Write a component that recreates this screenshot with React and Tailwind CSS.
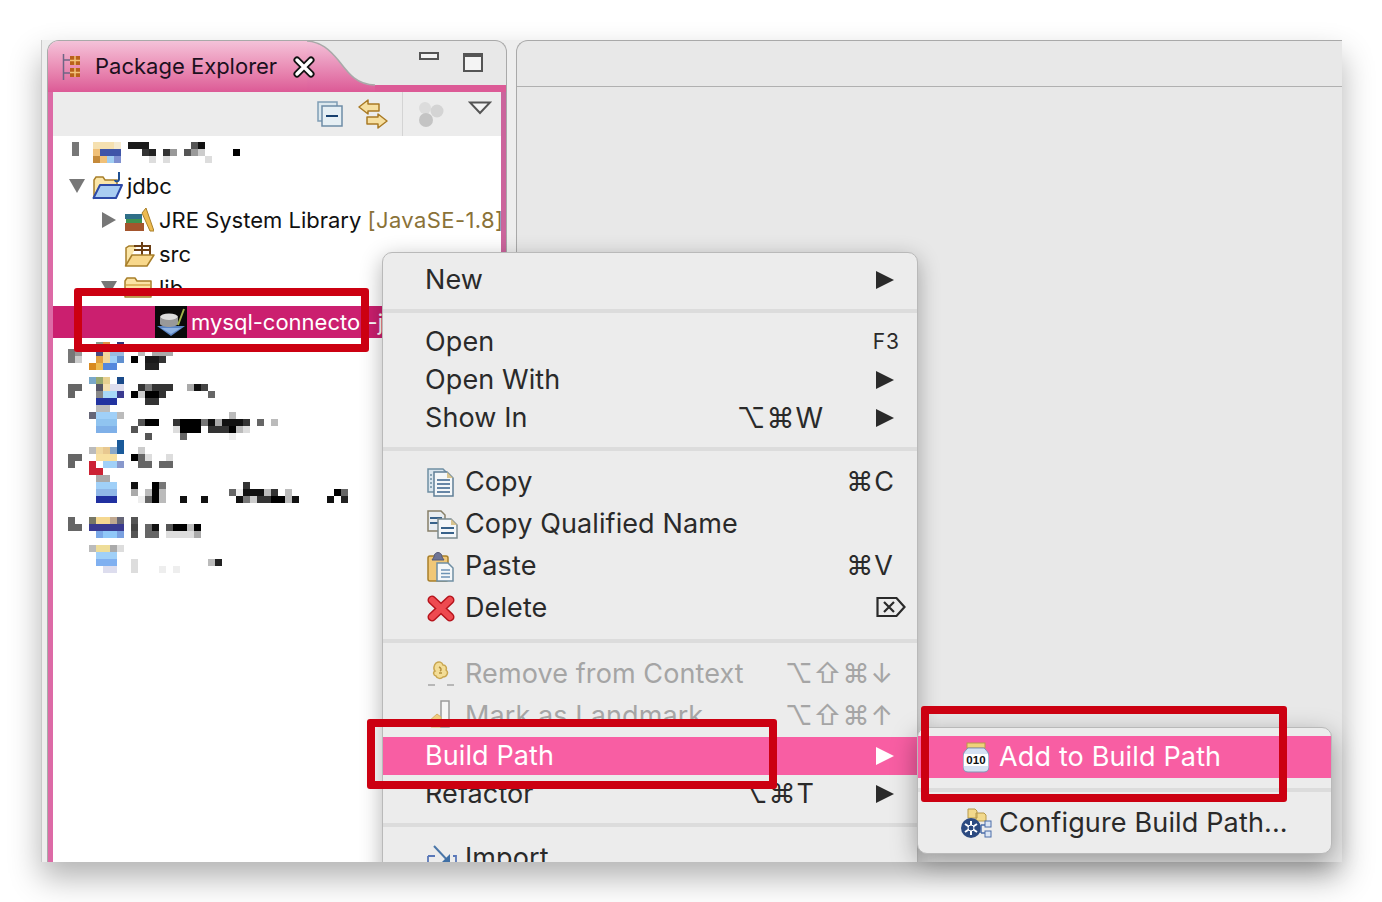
import React from 'react'

const Twist = ({ dir }) => (
  <svg width="18" height="16" viewBox="0 0 18 16" className="flex-none">
    {dir === 'down' ? <path d="M1 1h16l-8 14z" fill="#777" /> : <path d="M2 0l14 8-14 8z" fill="#777" />}
  </svg>
)

const MenuArrow = ({ white }) => (
  <svg width="18" height="20" viewBox="0 0 18 20"><path d="M0 1l18 9-18 9z" fill={white ? '#fff' : '#2a2a2a'} /></svg>
)

const PackageIcon = () => (
  <svg width="20" height="26" viewBox="0 0 20 26" className="flex-none">
    <path d="M1.500 0v26M1.500 6h7M1.500 19h7" stroke="#6f6585" strokeWidth="1.500" fill="none" />
    <rect x="8" y="2" width="10" height="9" fill="#b9611c" />
    <path d="M13 2v9M8 6.500h10" stroke="#f3c27a" strokeWidth="1.500" />
    <rect x="8" y="14" width="10" height="9" fill="#b9611c" />
    <path d="M13 14v9M8 18.500h10" stroke="#f3c27a" strokeWidth="1.500" />
  </svg>
)

const CloseIcon = () => (
  <svg width="22" height="22" viewBox="0 0 22 22" className="flex-none">
    <path d="M4 4l14 14M18 4L4 18" stroke="#111" strokeWidth="7" strokeLinecap="round" />
    <path d="M4 4l14 14M18 4L4 18" stroke="#fff" strokeWidth="3.500" strokeLinecap="round" />
  </svg>
)

const CollapseIcon = () => (
  <svg width="26" height="26" viewBox="0 0 26 26" className="flex-none">
    <rect x="1" y="1" width="19" height="19" fill="#dce8ee" stroke="#7f9db5" strokeWidth="1.500" />
    <rect x="5" y="5" width="20" height="20" fill="#e6eff4" stroke="#6d8ca6" strokeWidth="1.500" />
    <path d="M9 15h12" stroke="#17406f" strokeWidth="2" />
  </svg>
)

const LinkIcon = () => (
  <svg width="30" height="30" viewBox="0 0 30 30" className="flex-none">
    <path d="M1 8l9-7v4h11v7H10v3z" fill="#f6dfa0" stroke="#a97a25" strokeWidth="1.500" strokeLinejoin="round" />
    <path d="M29 22l-9 7v-4H9v-7h11v-3z" fill="#f6dfa0" stroke="#a97a25" strokeWidth="1.500" strokeLinejoin="round" />
  </svg>
)

const FilterIcon = () => (
  <svg width="27" height="27" viewBox="0 0 27 27" className="flex-none">
    <circle cx="8" cy="7" r="6" fill="#dcdcdc" />
    <circle cx="20" cy="10" r="6.500" fill="#d4d4d4" />
    <circle cx="9" cy="19" r="7" fill="#c4c4c4" />
  </svg>
)

const JavaProjectIcon = () => (
  <svg width="31" height="28" viewBox="0 0 31 28" className="flex-none">
    <path d="M2 25V8l2-3h7l2 3h12v5H9L2 25z" fill="#fbe6a8" stroke="#a87f2a" strokeWidth="1.500" />
    <path d="M1.500 26L8 13h22l-6 13z" fill="#a9cdf2" stroke="#2d4aa8" strokeWidth="2" strokeLinejoin="round" />
    <path d="M27 0v7c0 3-4 3-4 1" fill="none" stroke="#1f4f92" strokeWidth="2" />
  </svg>
)

const BooksIcon = () => (
  <svg width="30" height="26" viewBox="0 0 30 26" className="flex-none">
    <rect x="1" y="7" width="17" height="5" fill="#2f6f88" />
    <rect x="2" y="12" width="16" height="4" fill="#3f9150" />
    <rect x="1" y="16" width="19" height="8" fill="#a4552d" />
    <path d="M18 6l4-5 8 23h-4z" fill="#eebb50" stroke="#a87f2a" />
  </svg>
)

const SrcIcon = () => (
  <svg width="31" height="26" viewBox="0 0 31 26" className="flex-none">
    <path d="M2 24V7l3-2h8" fill="#fbe6a8" stroke="#a87f2a" strokeWidth="1.500" />
    <path d="M10 5h16v9M18 1v13M10 9h16" fill="none" stroke="#6b3e14" strokeWidth="2" />
    <path d="M1.500 25L8 14h22l-7 11z" fill="#f8d88c" stroke="#a87f2a" strokeWidth="1.500" strokeLinejoin="round" />
  </svg>
)

const FolderIcon = () => (
  <svg width="28" height="22" viewBox="0 0 28 22" className="flex-none">
    <path d="M1 20V4l2-3h8l2 3h14v16z" fill="#fbe3a4" stroke="#a87f2a" strokeWidth="1.500" strokeLinejoin="round" />
    <path d="M2 8h24" stroke="#d9a94d" strokeWidth="1.500" />
  </svg>
)

const MysqlJarIcon = () => (
  <svg width="32" height="32" viewBox="0 0 32 32" className="flex-none">
    <rect width="32" height="32" fill="#0a0a0a" />
    <path d="M2 20h28L16 30z" fill="#5b84c4" />
    <path d="M6 22h20L16 28z" fill="#8fb2e2" />
    <ellipse cx="14" cy="11" rx="9" ry="3.500" fill="#ddd" />
    <path d="M5 11v7c2 4 16 4 18 0v-7c-3 4-15 4-18 0z" fill="#999" />
    <path d="M23 19L29 3" stroke="#a5b34a" strokeWidth="2" />
  </svg>
)

const CopyIcon = () => (
  <svg width="28" height="30" viewBox="0 0 28 30">
    <path d="M1 2h15l3 3v20H1z" fill="#d9e5ee" stroke="#6f8ea3" strokeWidth="1.500" />
    <path d="M7 5h13l6 6v18H7z" fill="#f4f7f9" stroke="#5f7f96" strokeWidth="1.500" />
    <path d="M20 5l6 6h-6z" fill="#d9c48f" />
    <path d="M10 13h13M10 17h13M10 21h13M10 25h13" stroke="#38628a" strokeWidth="1.500" />
    <path d="M3 8h2M3 12h2M3 16h2M3 20h2" stroke="#6f8ea3" strokeWidth="1.500" />
  </svg>
)

const CopyQualifiedIcon = () => (
  <svg width="31" height="30" viewBox="0 0 31 30">
    <path d="M1 2h13l4 4v16H1z" fill="#e8edf1" stroke="#867f68" strokeWidth="1.500" />
    <path d="M3 9h12M3 14h12" stroke="#38628a" strokeWidth="2" />
    <path d="M11 10h13l6 6v13H11z" fill="#f4f7f9" stroke="#7b8a8f" strokeWidth="1.500" />
    <path d="M24 10l6 6h-6z" fill="#d9c48f" />
    <path d="M14 19h13M14 24h13" stroke="#38628a" strokeWidth="2" />
  </svg>
)

const PasteIcon = () => (
  <svg width="27" height="31" viewBox="0 0 27 31">
    <rect x="1" y="5" width="20" height="25" rx="2" fill="#f0c777" stroke="#a87f2a" strokeWidth="1.500" />
    <path d="M7 6c0-6 8-6 8 0l2 3H5z" fill="#6f7596" stroke="#555a78" />
    <path d="M10 12h11l5 5v13H10z" fill="#f4f7f9" stroke="#6f8ea3" strokeWidth="1.500" />
    <path d="M14 19h9M14 22.500h9M14 26h9" stroke="#6d93b5" strokeWidth="1.500" />
  </svg>
)

const DeleteIcon = () => (
  <svg width="28" height="27" viewBox="0 0 28 27">
    <path d="M5 5l18 17M23 5L5 22" stroke="#b5121b" strokeWidth="9" strokeLinecap="round" />
    <path d="M5 5l18 17M23 5L5 22" stroke="#ee4a50" strokeWidth="6" strokeLinecap="round" />
  </svg>
)

const DeleteKey = () => (
  <svg width="30" height="22" viewBox="0 0 30 22">
    <path d="M1.500 2h19l8 9-8 9h-19z" fill="none" stroke="#2a2a2a" strokeWidth="2.200" />
    <path d="M8 6l10 10M18 6L8 16" stroke="#2a2a2a" strokeWidth="2.200" />
  </svg>
)

const RemoveContextIcon = () => (
  <svg width="28" height="26" viewBox="0 0 28 26">
    <path d="M9 2c3-2 6-1 7 2 3 0 4 3 3 5 3 2 1 7-3 7-2 2-6 2-7-1-3-1-3-4-1-5-2-2-1-6 1-8z" fill="#f3dd97" stroke="#c9a650" strokeWidth="1.500" />
    <path d="M12 6c2 1 3 3 1 4M12 12h3" stroke="#b5913f" strokeWidth="1.500" fill="none" />
    <path d="M1 24h7M20 24h7" stroke="#a5a5a5" strokeWidth="1.500" />
  </svg>
)

const LandmarkIcon = () => (
  <svg width="24" height="32" viewBox="0 0 24 32">
    <rect x="14" y="1" width="8" height="26" fill="#f5f5f5" stroke="#9a9a9a" strokeWidth="1.500" />
    <path d="M1 22l9-8 4 3v10H4z" fill="#efcc80" stroke="#d7b065" />
  </svg>
)

const ImportIcon = () => (
  <svg width="30" height="26" viewBox="0 0 30 26">
    <path d="M7 1l15 16" stroke="#4a76a8" strokeWidth="2" />
    <path d="M23 9v9h-9z" fill="#3f6fa5" />
    <path d="M1 11h7M1 11v14M23 24h6V11h-3" fill="none" stroke="#5a78b8" strokeWidth="1.800" />
  </svg>
)

const JarIcon = () => (
  <svg width="26" height="31" viewBox="0 0 26 31">
    <rect x="4" y="1" width="18" height="5" fill="#f0d27a" stroke="#b79a4a" />
    <path d="M5 6h16c3 3 5 5 5 8v11c0 3-2 5-5 5H5c-3 0-5-2-5-5V14c0-3 2-5 5-8z" fill="#d5e0f2" stroke="#8294b5" />
    <rect x="1" y="12" width="24" height="12" fill="#fff" />
    <text x="13" y="22" textAnchor="middle" fontSize="11.500" fontWeight="700" fontFamily="Liberation Sans, sans-serif" fill="#111">010</text>
  </svg>
)

const ConfigureIcon = () => (
  <svg width="32" height="31" viewBox="0 0 32 31">
    <path d="M8 1h7l2 2v7H8zM16 5h8l2 2v6h-10z" fill="#f2d98c" stroke="#b79a4a" />
    <circle cx="11" cy="20" r="10" fill="#2c4a80" />
    <path d="M11 13v14M5 16l12 8M17 16L5 24" stroke="#fff" strokeWidth="2" />
    <circle cx="11" cy="20" r="3" fill="#2c4a80" stroke="#fff" />
    <path d="M21 17h5M21 25h5M21 17v8" stroke="#4a6ca8" strokeWidth="1.500" fill="none" />
    <rect x="25" y="13" width="6" height="6" fill="#dbe5f4" stroke="#4a6ca8" />
    <rect x="25" y="23" width="6" height="6" fill="#dbe5f4" stroke="#4a6ca8" />
  </svg>
)

// pixelated rows, page coordinates via viewBox
const cells = [
  [0, 4, 1, '#8a9a8a'], [0, 5, 1, '#e09040'], [0, 7, 1, '#33337a'],
  [1, 0, 1, '#777'], [1, 1, 1, '#999'], [1, 4, 1, '#4a4a80'], [1, 5, 1, '#f0d8a0'], [1, 6, 2, '#9abbe0'], [1, 10, 1, '#bbb'], [1, 12, 3, '#aaa'],
  [2, 0, 1, '#777'], [2, 1, 1, '#ccc'], [2, 4, 1, '#e0a040'], [2, 5, 1, '#f3d79a'], [2, 6, 1, '#a0d0f8'], [2, 7, 1, '#6090d0'], [2, 9, 1, '#000'], [2, 11, 2, '#1a1a1a'], [2, 13, 1, '#333'],
  [3, 3, 1, '#d88a20'], [3, 4, 1, '#eebb50'], [3, 5, 2, '#5588dd'], [3, 11, 2, '#222'],
  [5, 3, 1, '#7aa8c8'], [5, 4, 1, '#9aaa70'], [5, 5, 1, '#e8d090'], [5, 7, 1, '#1a4a8a'],
  [6, 0, 2, '#666'], [6, 4, 1, '#556'], [6, 5, 1, '#f5e0b0'], [6, 6, 2, '#dde'], [6, 10, 1, '#333'], [6, 11, 1, '#777'], [6, 12, 3, '#333'], [6, 17, 1, '#aaa'], [6, 18, 1, '#111'], [6, 19, 1, '#444'],
  [7, 0, 1, '#666'], [7, 4, 1, '#888'], [7, 5, 2, '#a8d8f8'], [7, 7, 1, '#3a3a90'], [7, 9, 1, '#000'], [7, 10, 1, '#ccc'], [7, 11, 2, '#000'], [7, 13, 1, '#333'], [7, 20, 1, '#666'],
  [8, 4, 3, '#2233a0'], [8, 11, 2, '#333'],
  [9, 4, 2, '#bbb'],
  [10, 3, 1, '#667'], [10, 4, 3, '#a0d0f8'], [10, 7, 1, '#bbb'], [10, 23, 1, '#bbb'],
  [11, 4, 3, '#90c4f0'], [11, 10, 1, '#555'], [11, 11, 2, '#000'], [11, 15, 1, '#333'], [11, 16, 3, '#000'], [11, 19, 1, '#777'], [11, 20, 1, '#111'], [11, 21, 1, '#aaa'], [11, 22, 3, '#111'], [11, 25, 1, '#333'], [11, 27, 1, '#666'], [11, 29, 1, '#bbb'],
  [12, 4, 3, '#7fb0e8'], [12, 9, 1, '#555'], [12, 15, 1, '#ddd'], [12, 16, 3, '#000'], [12, 20, 3, '#333'], [12, 23, 1, '#000'], [12, 24, 1, '#bbb'], [12, 25, 1, '#ddd'],
  [13, 11, 1, '#555'], [13, 16, 1, '#666'], [13, 23, 1, '#eee'],
  [14, 7, 1, '#1a5a9a'],
  [15, 3, 1, '#bbb'], [15, 4, 1, '#f0d8a0'], [15, 5, 1, '#e8c890'], [15, 6, 1, '#8aa8c8'], [15, 7, 1, '#1a5a9a'], [15, 10, 1, '#ccc'],
  [16, 0, 2, '#666'], [16, 4, 3, '#f8e0a0'], [16, 9, 1, '#000'], [16, 10, 1, '#666'], [16, 11, 1, '#ddd'], [16, 14, 1, '#ddd'],
  [17, 0, 1, '#666'], [17, 3, 1, '#cc2233'], [17, 5, 2, '#a0d0f8'], [17, 7, 1, '#8898cc'], [17, 10, 2, '#666'], [17, 13, 2, '#666'],
  [18, 3, 2, '#cc2233'],
  [19, 4, 2, '#aaa'],
  [20, 4, 3, '#a0d0f8'], [20, 9, 1, '#111'], [20, 12, 1, '#000'], [20, 13, 1, '#777'], [20, 25, 1, '#333'],
  [21, 4, 3, '#90b8e8'], [21, 9, 1, '#aaa'], [21, 11, 1, '#bbb'], [21, 12, 1, '#000'], [21, 13, 1, '#bbb'], [21, 23, 1, '#666'], [21, 24, 1, '#eee'], [21, 25, 3, '#111'], [21, 28, 1, '#bbb'], [21, 29, 1, '#333'], [21, 31, 1, '#bbb'], [21, 38, 1, '#000'], [21, 39, 1, '#666'],
  [22, 4, 3, '#2030a0'], [22, 10, 1, '#eee'], [22, 11, 1, '#666'], [22, 12, 1, '#000'], [22, 13, 1, '#bbb'], [22, 16, 1, '#111'], [22, 19, 1, '#111'], [22, 24, 1, '#111'], [22, 25, 1, '#777'], [22, 26, 1, '#ccc'], [22, 27, 2, '#333'], [22, 29, 2, '#000'], [22, 31, 1, '#bbb'], [22, 32, 1, '#111'], [22, 37, 1, '#111'], [22, 39, 1, '#222'],
  [25, 0, 1, '#666'], [25, 3, 1, '#776'], [25, 4, 2, '#f5d890'], [25, 6, 1, '#c0a890'], [25, 7, 1, '#667'], [25, 9, 1, '#555'],
  [26, 0, 2, '#666'], [26, 3, 5, '#3a3a90'], [26, 9, 1, '#444'], [26, 11, 1, '#666'], [26, 12, 1, '#111'], [26, 14, 1, '#555'], [26, 15, 2, '#000'], [26, 17, 1, '#bbb'], [26, 18, 1, '#000'],
  [27, 4, 1, '#7aa8e8'], [27, 5, 2, '#90c8f8'], [27, 7, 1, '#7aa0e0'], [27, 9, 1, '#555'], [27, 11, 2, '#666'], [27, 14, 4, '#ddd'], [27, 18, 1, '#aaa'],
  [29, 3, 1, '#bbb'], [29, 4, 2, '#eedd99'], [29, 6, 1, '#aaa'], [29, 7, 1, '#ddd'],
  [30, 4, 3, '#a0d0f8'],
  [31, 4, 3, '#80b0f0'], [31, 9, 1, '#ddd'], [31, 20, 1, '#bbb'], [31, 21, 1, '#222'],
  [32, 5, 2, '#dde'], [32, 9, 1, '#ddd'], [32, 13, 1, '#eee'], [32, 15, 1, '#eee'],
]

const topCells = [
  [0, 1, 1, '#777'], [0, 4, 3, '#f5e0b0'], [0, 7, 1, '#f5ead0'], [0, 9, 3, '#1a1a1a'], [0, 18, 1, '#555'], [0, 19, 1, '#111'],
  [1, 1, 1, '#777'], [1, 4, 1, '#f0c078'], [1, 5, 3, '#3f55a8'], [1, 11, 1, '#333'], [1, 12, 1, '#222'], [1, 14, 1, '#333'], [1, 15, 1, '#999'], [1, 17, 1, '#555'], [1, 18, 1, '#999'], [1, 19, 1, '#ccc'], [1, 24, 1, '#000'],
  [2, 4, 1, '#c58a3a'], [2, 5, 1, '#f0c078'], [2, 6, 1, '#9fcdf2'], [2, 7, 1, '#8090d0'], [2, 12, 1, '#ddd'], [2, 14, 1, '#ddd'], [2, 20, 1, '#ddd'],
]

const Mosaic = ({ box, data, x0, y0 }) => {
  const [vx, vy, vw, vh] = box
  return (
    <svg width={vw} height={vh} viewBox={box.join(' ')} className="block flex-none overflow-visible blur-[0.5px]">
      {data.map(([r, c, span, color], i) => (
        <rect key={i} x={x0 + c * 7} y={y0 + r * 7} width={span * 7} height={7} fill={color} />
      ))}
    </svg>
  )
}

const TreeRow = ({ indent, twist, icon, children }) => (
  <div className={`flex items-center h-[34px] ${indent}`}>
    <div className="w-[24px] flex-none">{twist && <Twist dir={twist} />}</div>
    <div className="w-[31px] flex-none flex justify-start">{icon}</div>
    <span className="ml-[4px] whitespace-nowrap">{children}</span>
  </div>
)

const Sep = () => <div className="h-[4px] my-[10px] bg-[#dcdcdc]" />

const MenuRow = ({ label, icon, shortcut, arrow, disabled, active, tall }) => (
  <div className={`flex items-center pr-[23px] ${tall ? 'h-[42px]' : 'h-[38px]'} ${active ? 'bg-[#f85ea3] text-white' : disabled ? 'text-[#a5a5a5]' : 'text-[#2a2a2a]'}`}>
    <div className={`flex-none flex items-center ${icon ? 'w-[82px] pl-[44px]' : 'w-[42px]'}`}>{icon}</div>
    <span className="flex-1 whitespace-nowrap tracking-[0.1px]">{label}</span>
    {shortcut}
    {arrow && <div className="ml-[52px] flex-none flex"><MenuArrow white={active} /></div>}
  </div>
)

const Keys = ({ children, className }) => (
  <span className={`font-['Inter','DejaVu_Sans',sans-serif] tracking-[1px] whitespace-nowrap ${className}`}>{children}</span>
)

const App = () => {
  return (
    <div className="relative w-[1382px] h-[902px] bg-white pt-[40px] pl-[41px] overflow-hidden font-['Inter','Liberation_Sans',sans-serif]">
      <div className="relative flex w-[1301px] h-[822px] overflow-hidden bg-[#eeeeee] border-l border-[#c9c9c9] shadow-[0_16px_30px_rgba(0,0,0,0.3)]">

        {/* left panel */}
        <div className="ml-[5px] w-[460px] h-full flex flex-col flex-none rounded-t-[12px] overflow-hidden border-x border-t border-[#a9a9a9] bg-[#e8e8e8]">
          <div className="flex h-[51px] flex-none">
            <div className="w-[259px] flex-none flex items-center pl-[14px] bg-gradient-to-b from-[#f4c2d9] to-[#dc5a96] text-[#1c1020] text-[22px]">
              <PackageIcon />
              <span className="ml-[13px] whitespace-nowrap">Package Explorer</span>
              <div className="relative z-10 ml-[16px] flex-none"><CloseIcon /></div>
            </div>
            <svg width="68" height="51" viewBox="0 0 68 51" className="flex-none">
              <defs>
                <linearGradient id="tabfill" x1="0" y1="0" x2="0" y2="1">
                  <stop offset="0" stopColor="#f4c2d9" />
                  <stop offset="1" stopColor="#dc5a96" />
                </linearGradient>
              </defs>
              <path d="M0 0C14 1 22 8 32 20C42 33 50 44 68 44V51H0Z" fill="url(#tabfill)" />
              <path d="M0 0C14 1 22 8 32 20C42 33 50 44 68 44" fill="none" stroke="#a9a9a9" strokeWidth="1.500" />
            </svg>
            <div className="flex-1 flex flex-col">
              <div className="flex-1 flex items-start pt-[10px] pl-[44px]">
                <div className="w-[20px] h-[8px] mt-[1px] border-2 border-[#555] bg-[#f4f4f4]" />
                <div className="w-[20px] h-[19px] ml-[24px] mt-[2px] border-2 border-t-[4px] border-[#555] bg-[#f4f4f4]" />
              </div>
              <div className="h-[7px] bg-[#dc5a96]" />
            </div>
          </div>
          <div className="flex-1 flex flex-col border-x-[5px] border-l-[#dd6aa6] border-r-[#cb659c] min-h-0">
            <div className="h-[44px] flex-none flex items-center bg-[#ececec] pl-[264px]">
              <CollapseIcon />
              <div className="ml-[15px]"><LinkIcon /></div>
              <div className="w-[1px] h-[44px] ml-[14px] bg-[#d4d4d4]" />
              <div className="ml-[14px]"><FilterIcon /></div>
              <svg width="24" height="14" viewBox="0 0 24 14" className="ml-[24px] mb-[12px] flex-none">
                <path d="M2 1.500h20L12 12z" fill="#f4f4f4" stroke="#555" strokeWidth="2" />
              </svg>
            </div>
            <div className="flex-1 bg-white text-[22px] text-[#111] min-h-0">
              <Mosaic box={[53, 136, 447, 33]} data={topCells} x0={65} y0={142} />
              <TreeRow indent="pl-[15px]" twist="down" icon={<JavaProjectIcon />}>jdbc</TreeRow>
              <TreeRow indent="pl-[47px]" twist="right" icon={<BooksIcon />}>
                JRE System Library <span className="text-[#8a7238] tracking-[0.4px]">[JavaSE-1.8]</span>
              </TreeRow>
              <TreeRow indent="pl-[47px]" icon={<SrcIcon />}>src</TreeRow>
              <TreeRow indent="pl-[47px]" twist="down" icon={<FolderIcon />}>lib</TreeRow>
              <div className="flex items-center h-[32px] my-px pl-[102px] bg-[#cb1f6f] text-white">
                <MysqlJarIcon />
                <span className="ml-[4px] whitespace-nowrap">mysql-connector-java-8.0.jar</span>
              </div>
              <Mosaic box={[53, 339, 447, 240]} data={cells} x0={68} y0={342} />
            </div>
          </div>
        </div>

        {/* right panel */}
        <div className="ml-[9px] flex-1 flex flex-col rounded-tl-[12px] border-l border-t border-[#a9a9a9] bg-[#e8e8e8]">
          <div className="h-[46px] border-b border-[#b0b0b0]" />
        </div>

        {/* context menu */}
        <div className="absolute left-[340px] top-[212px] w-[536px] pt-[8px] pb-[8px] rounded-[10px] border border-[#b9b9b9] bg-[#ececec] text-[27px] shadow-[0_6px_22px_rgba(0,0,0,0.3)]">
          <MenuRow label="New" arrow />
          <Sep />
          <MenuRow label="Open" shortcut={<Keys className="text-[21px] -mr-[6px]">F3</Keys>} />
          <MenuRow label="Open With" arrow />
          <MenuRow label="Show In" arrow shortcut={<Keys className="text-[28px]">⌥⌘W</Keys>} />
          <Sep />
          <MenuRow tall label="Copy" icon={<CopyIcon />} shortcut={<Keys className="-mr-[1px]">⌘C</Keys>} />
          <MenuRow tall label="Copy Qualified Name" icon={<CopyQualifiedIcon />} />
          <MenuRow tall label="Paste" icon={<PasteIcon />} shortcut={<Keys>⌘V</Keys>} />
          <MenuRow tall label="Delete" icon={<DeleteIcon />} shortcut={<div className="-mr-[12px] -mt-[3px]"><DeleteKey /></div>} />
          <Sep />
          <MenuRow tall disabled label="Remove from Context" icon={<RemoveContextIcon />} shortcut={<Keys>⌥⇧⌘↓</Keys>} />
          <MenuRow tall disabled label="Mark as Landmark" icon={<LandmarkIcon />} shortcut={<Keys>⌥⇧⌘↑</Keys>} />
          <MenuRow active label="Build Path" arrow />
          <MenuRow label="Refactor" arrow shortcut={<Keys className="mr-[9px]">⌥⌘T</Keys>} />
          <Sep />
          <MenuRow tall label="Import" icon={<ImportIcon />} />
        </div>
      </div>

      {/* submenu */}
      <div className="absolute left-[917px] top-[727px] w-[415px] pt-[8px] pb-[9px] rounded-[10px] border border-[#b9b9b9] bg-[#ececec] text-[27px] tracking-[0.15px] text-[#2a2a2a] shadow-[0_8px_26px_rgba(0,0,0,0.35)]">
        <div className="flex items-center h-[42px] pl-[45px] bg-[#f85ea3] text-white">
          <JarIcon />
          <span className="ml-[10px] whitespace-nowrap">Add to Build Path</span>
        </div>
        <div className="h-[4px] my-[10px] bg-[#dcdcdc]" />
        <div className="flex items-center h-[42px] pl-[42px]">
          <ConfigureIcon />
          <span className="ml-[7px] whitespace-nowrap">Configure Build Path...</span>
        </div>
      </div>

      {/* red annotation boxes */}
      <div className="absolute left-[74px] top-[288px] w-[295px] h-[64px] rounded-[3px] border-[8px] border-[#cc0011]" />
      <div className="absolute left-[367px] top-[719px] w-[410px] h-[70px] rounded-[3px] border-[8px] border-[#cc0011]" />
      <div className="absolute left-[921px] top-[706px] w-[366px] h-[96px] rounded-[3px] border-[8px] border-[#cc0011]" />
    </div>
  )
}

export default App
